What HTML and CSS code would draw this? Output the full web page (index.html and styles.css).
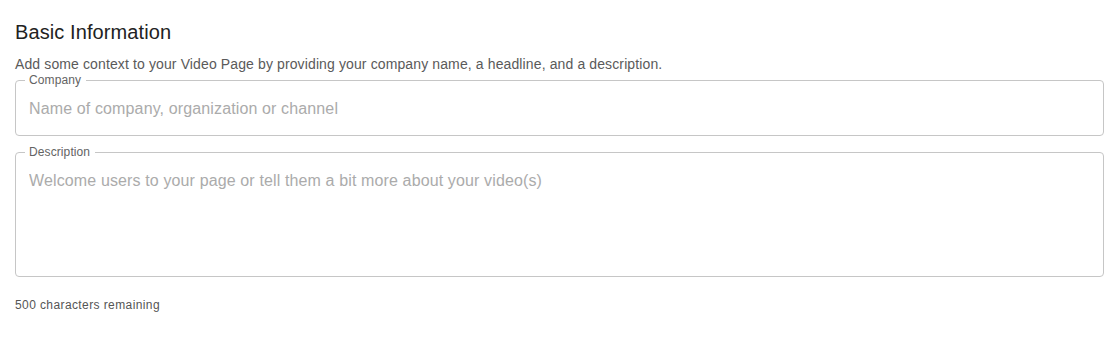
FILE: index.html
```html
<!DOCTYPE html>
<html lang="en">
<head>
    <meta charset="UTF-8">
    <meta name="viewport" content="width=device-width, initial-scale=1.0">
    <title>Basic Information</title>
    <link rel="stylesheet" href="styles.css">
</head>
<body>

<div class="section">
    <h2 class="heading">Basic Information</h2>
    <p class="subtitle">Add some context to your Video Page by providing your company name, a headline, and a description.</p>

    <fieldset class="field">
        <legend class="label">Company</legend>
        <input class="input" type="text" placeholder="Name of company, organization or channel">
    </fieldset>

    <fieldset class="field field-desc">
        <legend class="label">Description</legend>
        <textarea class="input textarea" placeholder="Welcome users to your page or tell them a bit more about your video(s)"></textarea>
    </fieldset>

    <div class="helper">500 characters remaining</div>
</div>

</body>
</html>
```

FILE: styles.css
```css
body{
    margin: 0;
    background-color: #fff;
    font-family: "Liberation Sans", Arial, sans-serif;
}
.section{
    width: 1089px;
    padding: 20px 0 0 15px;
}
.heading{
    margin: 0;
    font-size: 20px;
    line-height: 24px;
    font-weight: normal;
    letter-spacing: 0.1px;
    color: #222;
}
.subtitle{
    margin: 12px 0 0 0;
    font-size: 14px;
    line-height: 17px;
    letter-spacing: 0.12px;
    color: #5a5a5a;
}

.field{
    margin: 0;
    padding: 0 13px;
    border: 1px solid #c6c6c6;
    border-radius: 4px;
    min-width: 0;
}
.field-desc{
    margin-top: 9px;
}
.label{
    padding: 0 5px 0 4px;
    margin-left: -4px;
    font-size: 12px;
    line-height: 14px;
    letter-spacing: 0.1px;
    color: #636363;
}
.input{
    display: block;
    box-sizing: border-box;
    width: 100%;
    height: 48px;
    margin: 0;
    padding: 12px 0 17px 0;
    border: none;
    outline: none;
    background: transparent;
    font-family: "Liberation Sans", Arial, sans-serif;
    font-size: 16px;
    line-height: 19px;
    letter-spacing: 0.13px;
    color: #222;
}
.input::placeholder{
    color: #ababab;
    opacity: 1;
}
.textarea{
    height: 117px;
    resize: none;
}
.helper{
    margin-top: 21px;
    font-size: 12px;
    line-height: 14px;
    letter-spacing: 0.4px;
    color: #555;
}
```
